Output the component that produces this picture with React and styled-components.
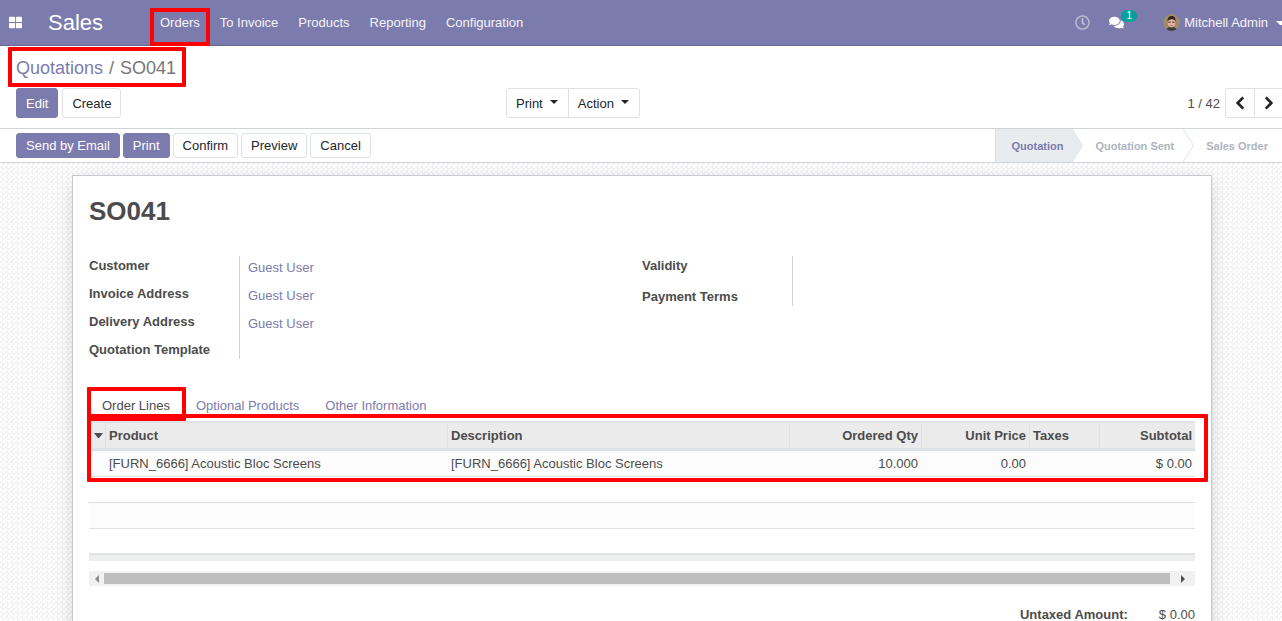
import React from 'react'
import styled, {createGlobalStyle} from 'styled-components'
import {FaThLarge, FaRegClock, FaComments, FaChevronLeft, FaChevronRight} from 'react-icons/fa'

const Global = createGlobalStyle`
html, body {
  margin: 0;
  height: 621px;
  overflow: hidden;
  background: #fff;
  font-family: "Liberation Sans", Arial, sans-serif;
  font-size: 13px;
  color: #4c4c4c;
}
* { box-sizing: border-box; }
`
const Page = styled.div`
position: relative;
height: 621px;
overflow: hidden;
display: flex;
flex-direction: column;
`
const Mark = styled.div`
position: absolute;
left: ${p => p.$x}px;
top: ${p => p.$y}px;
width: ${p => p.$w}px;
height: ${p => p.$h}px;
border: 4px solid #f00;
border-radius: 1px;
z-index: 5;
`
const Nav = styled.nav`
flex: none;
height: 46px;
display: flex;
align-items: center;
background: #7c7bad;
border-bottom: 1px solid #66668f;
color: #fff;
`
const Apps = styled.a`
display: flex;
width: 48px;
padding-left: 9px;
font-size: 13px;
`
const Brand = styled.span`
font-size: 22px;
width: 102px;
`
const NavItem = styled.a`
padding: 0 10px;
line-height: 45px;
font-size: 13px;
color: #fff;
opacity: .92;
`
const NavRight = styled.div`
margin-left: auto;
display: flex;
align-items: center;
height: 100%;
`
const Clock = styled.span`
display: flex;
font-size: 15px;
color: rgba(255,255,255,.5);
margin-right: 19px;
`
const Chat = styled.span`
position: relative;
display: flex;
font-size: 15px;
width: 15px;
margin-right: 39px;
`
const Badge = styled.span`
position: absolute;
left: 12px;
top: -5px;
width: 16px;
height: 12px;
border-radius: 6px;
background: #00a09d;
font-size: 10px;
line-height: 12px;
text-align: center;
`
const Avatar = styled.svg`
width: 17px;
height: 17px;
border-radius: 50%;
margin-right: 4px;
`
const UserName = styled.span`
margin-right: 8px;
opacity: .92;
`
const NavCaret = styled.span`
width: 6px;
border-top: 4px solid #fff;
border-left: 4px solid transparent;
border-right: 0;
margin-top: 1px;
`
const ControlPanel = styled.div`
flex: none;
height: 83px;
padding-left: 16px;
border-bottom: 1px solid #ced4da;
`
const Breadcrumb = styled.div`
height: 42px;
padding-top: 11px;
font-size: 18px;
line-height: 22px;
color: #777;
`
const Crumb = styled.a`
color: #7c7bad;
`
const Slash = styled.span`
padding: 0 6px;
`
const CpRow = styled.div`
display: flex;
align-items: flex-start;
`
const CpLeft = styled.div`
display: flex;
gap: 4px;
width: 490px;
`
const Button = styled.button`
height: ${p => p.$small ? 25 : 30}px;
padding: 0 9px;
border: 1px solid ${p => p.$primary ? '#7c7bad' : '#dee2e6'};
border-radius: 3px;
background: ${p => p.$primary ? '#7c7bad' : '#fff'};
color: ${p => p.$primary ? '#fff' : '#212529'};
font: 13px "Liberation Sans", Arial, sans-serif;
white-space: nowrap;
`
const Group = styled.div`
display: flex;
height: 30px;
border: 1px solid #dee2e6;
border-radius: 3px;
`
const GroupItem = styled.span`
display: flex;
align-items: center;
gap: 7px;
padding: 0 10px 0 9px;
color: #212529;
& + & { border-left: 1px solid #dee2e6; }
&::after {
  content: "";
  border-top: 4px solid #212529;
  border-left: 4px solid transparent;
  border-right: 4px solid transparent;
  margin-top: -2px;
}
`
const Pager = styled.div`
margin-left: auto;
display: flex;
align-items: center;
height: 30px;
color: #4c4c4c;
`
const PagerText = styled.span`
margin-right: 5px;
`
const PagerButtons = styled.div`
display: flex;
height: 30px;
border: 1px solid #dee2e6;
border-right: 0;
border-radius: 3px 0 0 3px;
`
const PagerBtn = styled.span`
display: flex;
align-items: center;
justify-content: center;
width: 28px;
font-size: 14px;
color: #212529;
& + & { border-left: 1px solid #dee2e6; width: 28px; }
svg { stroke: currentColor; stroke-width: 24px; }
`
const StatusBar = styled.div`
flex: none;
height: 34px;
display: flex;
align-items: center;
justify-content: space-between;
padding-left: 16px;
border-bottom: 1px solid #ced4da;
`
const Actions = styled.div`
display: flex;
gap: 3px;
margin-top: -1px;
`
const Steps = styled.div`
display: flex;
height: 33px;
`
const Step = styled.div`
position: relative;
display: flex;
align-items: center;
height: 33px;
padding: 0 ${p => p.$right}px 0 ${p => p.$left}px;
background: ${p => p.$active ? '#e9ecef' : '#fff'};
border-left: ${p => p.$active ? '1px solid #dee2e6' : '0'};
color: ${p => p.$active ? '#7c7bad' : '#adb5bd'};
font-size: 11px;
font-weight: 700;
white-space: nowrap;
`
const Arrow = styled.svg`
position: absolute;
left: 100%;
top: 0;
width: 11px;
height: 33px;
z-index: 1;
`
const Content = styled.div`
flex: 1;
min-height: 0;
overflow: hidden;
background-color: #fff;
background-image: conic-gradient(#f3f3f3 25%, #fff 0 50%, #f3f3f3 0 75%, #fff 0);
background-size: 5px 5px;
padding: 12px 70px 0 72px;
`
const Sheet = styled.div`
background: #fff;
border: 1px solid #c8c8d0;
box-shadow: 0 5px 20px -5px rgba(0,0,0,.25);
padding: 0 16px;
height: 600px;
`
const Title = styled.h1`
margin: 0;
height: 79px;
padding-top: 20px;
font-size: 26px;
line-height: 30px;
font-weight: 700;
color: #4c4c4c;
`
const Groups = styled.div`
display: flex;
height: 133px;
`
const InfoGroup = styled.div`
display: flex;
align-items: flex-start;
width: ${p => p.$w}px;
`
const Labels = styled.div`
width: 150px;
`
const Label = styled.div`
height: ${p => p.$h}px;
padding-top: 3px;
font-weight: 700;
line-height: 15px;
color: #4c4c4c;
`
const Values = styled.div`
border-left: 1px solid #ced4da;
padding-left: 8px;
margin-top: 1px;
height: ${p => p.$h}px;
`
const Value = styled.div`
height: 28px;
padding-top: 4px;
line-height: 15px;
color: #7c7bad;
`
const Tabs = styled.div`
display: flex;
height: 33px;
align-items: center;
padding-top: 1px;
`
const Tab = styled.a`
padding: 0 13px;
color: ${p => p.$active ? '#4c4c4c' : '#7c7bad'};
`
const Table = styled.table`
width: 1106px;
table-layout: fixed;
border-collapse: separate;
border-spacing: 0;
margin-top: 0;
`
const Th = styled.th`
width: ${p => p.$w}px;
height: 30px;
padding: 0 3px 0 3px;
background: #ebebeb;
border-top: 2px solid #dee2e6;
border-bottom: 3px solid #dee2e6;
border-right: ${p => p.$last ? '0' : '1px solid #dee2e6'};
text-align: ${p => p.$right ? 'right' : 'left'};
font-size: 13px;
font-weight: 700;
color: #4c4c4c;
white-space: nowrap;
`
const SortCaret = styled.span`
display: block;
margin-left: 2px;
width: 9px;
border-top: 5px solid #4c4c4c;
border-left: 4px solid transparent;
border-right: 4px solid transparent;
`
const Td = styled.td`
height: ${p => p.$h || 26}px;
padding: 0 4px 0 3px;
padding-right: ${p => p.$end ? 3 : 4}px;
background: ${p => p.$odd ? '#fcfcfc' : '#fff'};
border-bottom: 1px solid #dee2e6;
text-align: ${p => p.$right ? 'right' : 'left'};
color: #4c4c4c;
white-space: nowrap;
`
const TableFoot = styled.div`
height: 7px;
background: #eeeeee;
border-top: 1px solid #dee2e6;
`
const Track = styled.div`
display: flex;
align-items: center;
height: 15px;
margin-top: 10px;
background: #f1f1f1;
`
const Thumb = styled.div`
width: 1066px;
height: 11px;
background: #bdbdbd;
`
const TrackEnd = styled.span`
display: flex;
align-items: center;
justify-content: center;
width: ${p => p.$w}px;
&::after {
  content: "";
  border-top: 4px solid transparent;
  border-bottom: 4px solid transparent;
  border-${p => p.$dir === 'left' ? 'right' : 'left'}: 4px solid ${p => p.$dir === 'left' ? '#8a8a8a' : '#505050'};
}
`
const Totals = styled.div`
display: flex;
justify-content: flex-end;
gap: 31px;
margin-top: 21px;
line-height: 15px;
`
const TotalLabel = styled.span`
font-weight: 700;
`

const columns = [
  {key: 'sort', w: 17},
  {key: 'Product', w: 342},
  {key: 'Description', w: 342},
  {key: 'Ordered Qty', w: 132, right: true},
  {key: 'Unit Price', w: 108, right: true},
  {key: 'Taxes', w: 70},
  {key: 'Subtotal', w: 95, right: true, last: true},
]

const Face = () => (
  <Avatar viewBox="0 0 17 17">
    <rect width="17" height="17" fill="#a08a6c"/>
    <path d="M3 17c0-3 2.500-4 5.500-4s5.500 1 5.500 4z" fill="#3f3a3a"/>
    <ellipse cx="8.500" cy="8.500" rx="3.800" ry="5" fill="#e0b79c"/>
    <path d="M4.500 7.500c-.4-3.700 2-5.500 4.200-5.500s4.200 1.700 3.800 5.300c-.8-1.500-2.300-2.300-4-2.100-1.700.1-3.200 1-4 2.300z" fill="#33261f"/>
    <path d="M5.300 8.200h2.500M9.200 8.200h2.500" stroke="#40302c" strokeWidth="1"/>
    <path d="M7.200 11.500h2.600" stroke="#a8604f" strokeWidth=".8"/>
  </Avatar>
)

const StepArrow = () => (
  <Arrow viewBox="0 0 11 33">
    <path d="M0 0 L10.500 16.500 L0 33" fill="#fff"/>
    <path d="M0 0 L10.500 16.500 L0 33" fill="none" stroke="#dee2e6"/>
  </Arrow>
)

const ActiveArrow = () => (
  <Arrow viewBox="0 0 11 33">
    <path d="M0 0 L10.500 16.500 L0 33" fill="#e9ecef"/>
    <path d="M0 0 L10.500 16.500 L0 33" fill="none" stroke="#dee2e6"/>
  </Arrow>
)

export default function App(){
  return(
    <Page>
      <Global/>
      <Mark $x={150} $y={8} $w={60} $h={38}/>
      <Mark $x={8} $y={47} $w={178} $h={40}/>
      <Mark $x={87} $y={387} $w={99} $h={34}/>
      <Mark $x={87} $y={414} $w={1121} $h={68}/>

      <Nav>
        <Apps><FaThLarge/></Apps>
        <Brand>Sales</Brand>
        <NavItem>Orders</NavItem>
        <NavItem>To Invoice</NavItem>
        <NavItem>Products</NavItem>
        <NavItem>Reporting</NavItem>
        <NavItem>Configuration</NavItem>
        <NavRight>
          <Clock><FaRegClock/></Clock>
          <Chat><FaComments/><Badge>1</Badge></Chat>
          <Face/>
          <UserName>Mitchell Admin</UserName>
          <NavCaret/>
        </NavRight>
      </Nav>

      <ControlPanel>
        <Breadcrumb><Crumb>Quotations</Crumb><Slash>/</Slash>SO041</Breadcrumb>
        <CpRow>
          <CpLeft>
            <Button $primary>Edit</Button>
            <Button>Create</Button>
          </CpLeft>
          <Group>
            <GroupItem>Print</GroupItem>
            <GroupItem>Action</GroupItem>
          </Group>
          <Pager>
            <PagerText>1 / 42</PagerText>
            <PagerButtons>
              <PagerBtn><FaChevronLeft/></PagerBtn>
              <PagerBtn><FaChevronRight/></PagerBtn>
            </PagerButtons>
          </Pager>
        </CpRow>
      </ControlPanel>

      <StatusBar>
        <Actions>
          <Button $small $primary>Send by Email</Button>
          <Button $small $primary>Print</Button>
          <Button $small>Confirm</Button>
          <Button $small>Preview</Button>
          <Button $small>Cancel</Button>
        </Actions>
        <Steps>
          <Step $active $left={15} $right={9}>Quotation<ActiveArrow/></Step>
          <Step $left={23} $right={9}>Quotation Sent<StepArrow/></Step>
          <Step $left={23} $right={14}>Sales Order</Step>
        </Steps>
      </StatusBar>

      <Content>
        <Sheet>
          <Title>SO041</Title>
          <Groups>
            <InfoGroup $w={553}>
              <Labels>
                <Label $h={28}>Customer</Label>
                <Label $h={28}>Invoice Address</Label>
                <Label $h={28}>Delivery Address</Label>
                <Label $h={28}>Quotation Template</Label>
              </Labels>
              <Values $h={103}>
                <Value>Guest User</Value>
                <Value>Guest User</Value>
                <Value>Guest User</Value>
              </Values>
            </InfoGroup>
            <InfoGroup $w={553}>
              <Labels>
                <Label $h={31}>Validity</Label>
                <Label $h={28}>Payment Terms</Label>
              </Labels>
              <Values $h={50}/>
            </InfoGroup>
          </Groups>
          <Tabs>
            <Tab $active>Order Lines</Tab>
            <Tab>Optional Products</Tab>
            <Tab>Other Information</Tab>
          </Tabs>
          <Table>
            <thead>
              <tr>
                {columns.map(c => (
                  <Th key={c.key} $w={c.w} $right={c.right} $last={c.last}>
                    {c.key === 'sort' ? <SortCaret/> : c.key}
                  </Th>
                ))}
              </tr>
            </thead>
            <tbody>
              <tr>
                <Td $odd/>
                <Td $odd>[FURN_6666] Acoustic Bloc Screens</Td>
                <Td $odd>[FURN_6666] Acoustic Bloc Screens</Td>
                <Td $odd $right>10.000</Td>
                <Td $odd $right>0.00</Td>
                <Td $odd/>
                <Td $odd $right $end>$ 0.00</Td>
              </tr>
              <tr><Td colSpan={7}/></tr>
              <tr><Td colSpan={7} $odd/></tr>
              <tr><Td colSpan={7} $h={25}/></tr>
            </tbody>
          </Table>
          <TableFoot/>
          <Track>
            <TrackEnd $w={15} $dir="left"/>
            <Thumb/>
            <TrackEnd $w={25} $dir="right"/>
          </Track>
          <Totals>
            <TotalLabel>Untaxed Amount:</TotalLabel>
            <span>$ 0.00</span>
          </Totals>
        </Sheet>
      </Content>
    </Page>
  )
}
